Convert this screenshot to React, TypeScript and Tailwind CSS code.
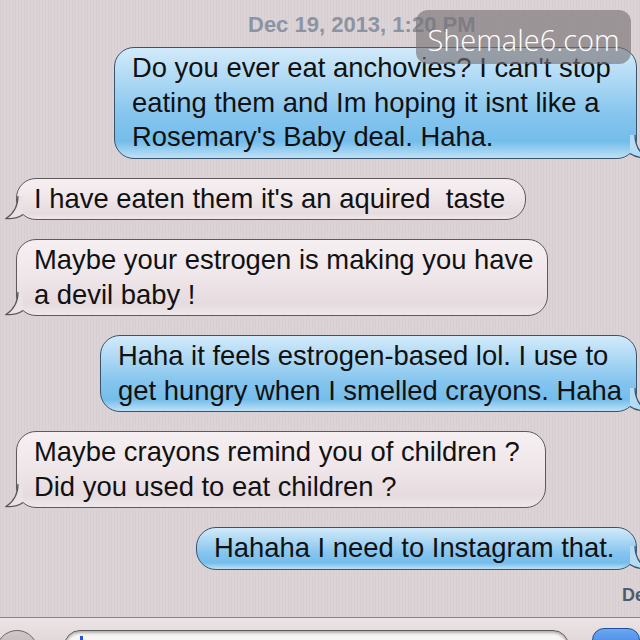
import React from "react";

const font = { fontFamily: '"Liberation Sans", Arial, sans-serif' };

const Tail = ({ side }: { side: "left" | "right" }) => {
  const blue = side === "right";
  return (
    <svg
      width="18"
      height="24"
      viewBox="0 0 18 24"
      className={`absolute bottom-[-1px] ${blue ? "right-[-12px] -scale-x-100" : "left-[-12px]"}`}
    >
      <path
        d="M13 0 C13 10 8 18 1 22.5 C8 23 14 21.5 18 18.5 L18 0 Z"
        fill={blue ? "#b4dcf4" : "#ebe2e5"}
      />
      <path
        d="M13 0 C13 10 8 18 1 22.5 C8 23 14 21.5 18 18.5"
        fill="none"
        stroke={blue ? "#3b546c" : "#5f595b"}
        strokeWidth="1.3"
      />
    </svg>
  );
};

const Bubble = ({ lines, mine, width }: { lines: string[]; mine?: boolean; width: string }) => (
  <div
    className={`relative ${width} rounded-[20px] border px-[17px] py-[3px] text-[27.4px] leading-[34.5px] text-[#111] whitespace-pre ${
      mine
        ? "self-end mr-[3px] border-[#3b546c] bg-[linear-gradient(180deg,#d2eafa_0%,#a6d5f3_35%,#86c5ee_60%,#74bdeb_85%,#bfe1f5_100%)]"
        : "self-start ml-[16px] border-[#5f595b] bg-[linear-gradient(180deg,#f6eff1_0%,#efe6e9_50%,#e6dbde_85%,#efe7e9_100%)]"
    }`}
  >
    {lines.map((l, i) => (
      <div key={i}>{l}</div>
    ))}
    <Tail side={mine ? "right" : "left"} />
  </div>
);

export default function App() {
  return (
    <div
      style={font}
      className="relative w-[640px] h-[640px] overflow-hidden flex flex-col bg-[#dbd3d5] bg-[repeating-linear-gradient(90deg,rgba(0,0,0,0.025)_0px,rgba(0,0,0,0.025)_1px,transparent_1px,transparent_3px)]"
    >
      <div className="mt-[12px] ml-[248px] text-[22px] leading-[26px] font-bold text-[#8c94a3] whitespace-nowrap">
        Dec 19, 2013, 1:20 PM
      </div>

      <div className="flex flex-col gap-[19px] mt-[9px]">
        <Bubble
          mine
          width="w-[523px]"
          lines={[
            "Do you ever eat anchovies? I can't stop",
            "eating them and Im hoping it isnt like a",
            "Rosemary's Baby deal. Haha.",
          ]}
        />
        <Bubble width="w-[510px]" lines={["I have eaten them it's an aquired  taste"]} />
        <Bubble
          width="w-[532px]"
          lines={["Maybe your estrogen is making you have", "a devil baby !"]}
        />
        <Bubble
          mine
          width="w-[537px]"
          lines={["Haha it feels estrogen-based lol. I use to", "get hungry when I smelled crayons. Haha"]}
        />
        <Bubble
          width="w-[530px]"
          lines={["Maybe crayons remind you of children ?", "Did you used to eat children ?"]}
        />
        <Bubble mine width="w-[441px]" lines={["Hahaha I need to Instagram that."]} />
      </div>

      <div className="mt-[14px] ml-[622px] text-[18px] leading-[22px] font-bold text-[#4f5b6b] whitespace-nowrap">
        Delivered
      </div>

      <div className="mt-auto h-[23px] border-t border-[#8a8385] bg-[linear-gradient(180deg,#ece4e5,#e2d9db)] flex items-start pt-[12px]">
        <div className="ml-[-4px] w-[44px] h-[44px] rounded-full border border-[#6d6769] bg-[linear-gradient(180deg,#cfc9cb,#a9a3a6)]" />
        <div className="ml-[26px] w-[531px] h-[40px] rounded-[16px] border border-[#5e5a5b] bg-[#f8f5f5] shadow-[inset_0_2px_3px_rgba(0,0,0,0.3)] pl-[15px] pt-[5px]">
          <div className="w-[3px] h-[30px] bg-[#2c52d6]" />
        </div>
        <div className="ml-[23px] mt-[-2px] w-[50px] h-[40px] rounded-[12px] border border-[#1f4f9c] bg-[linear-gradient(180deg,#6aa8f0,#1f62d8)]" />
      </div>

      <div
        className="absolute top-[10px] left-[416px] w-[215px] h-[54px] rounded-[12px] bg-[rgba(118,112,114,0.62)] flex items-center justify-center pt-[6px] text-white text-[29px] font-light"
        style={{ fontFamily: '"Open Sans", sans-serif' }}
      >
        Shemale6.com
      </div>
    </div>
  );
}
